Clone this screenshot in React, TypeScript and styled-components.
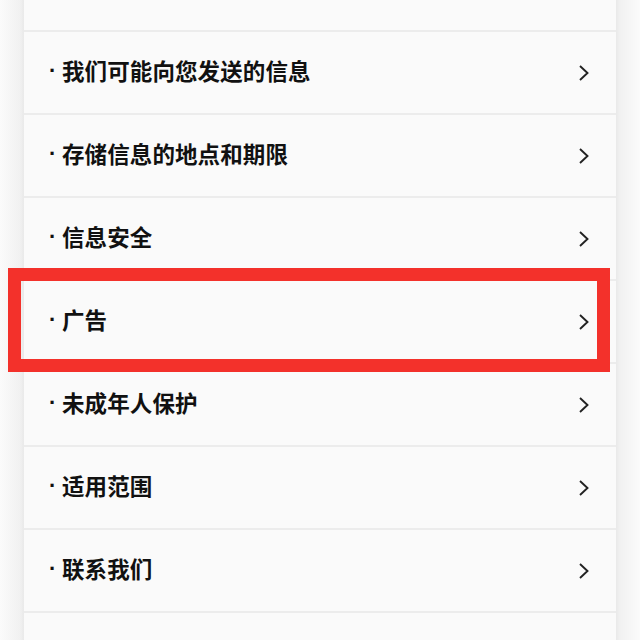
import React from "react";
import styled, { createGlobalStyle } from "styled-components";

const Global = createGlobalStyle`
  html, body { margin: 0; padding: 0; background: #f6f6f6; }
  body { font-family: "Noto Sans CJK SC", "Noto Sans", sans-serif; }
`;

const Page = styled.div`
  height: 640px;
  overflow: hidden;
  padding: 0 24px;
  background: linear-gradient(to right, #fbfbfb 0px, #efefef 24px, #efefef 616px, #fbfbfb 640px);
`;

const Card = styled.div`
  margin-top: -51px;
  background: #fafafa;
  box-shadow: 0 0 6px rgba(0, 0, 0, 0.05);
`;

const Row = styled.div`
  position: relative;
  height: 81px;
  border-bottom: 2px solid #ececec;
  display: flex;
  align-items: center;
  justify-content: space-between;
  padding: 0 26px 0 24px;
  box-sizing: content-box;
`;

const Label = styled.span`
  display: flex;
  align-items: center;
  font-size: 22.5px;
  font-weight: 700;
  color: #111;
  margin-top: -5px;
  letter-spacing: 0.1px;
`;

const Dot = styled.span`
  display: inline-block;
  width: 14px;
  font-family: "Liberation Sans", Arial, sans-serif;
  font-weight: 700;
  font-size: 22px;
  padding-left: 1px;
  margin-top: 2px;
  box-sizing: border-box;
`;

const Highlight = styled.span`
  position: absolute;
  top: -13px;
  left: -16px;
  right: 6px;
  bottom: -10px;
  border: 13px solid #f3312b;
  pointer-events: none;
`;

const Chevron = () => (
  <svg width="12" height="18" viewBox="0 0 12 18" fill="none">
    <polyline points="2,2 9.5,9 2,16" stroke="#222" strokeWidth="1.9" strokeLinejoin="miter" strokeLinecap="butt" />
  </svg>
);

const items = [
  "",
  "我们可能向您发送的信息",
  "存储信息的地点和期限",
  "信息安全",
  "广告",
  "未成年人保护",
  "适用范围",
  "联系我们",
  "",
];

export default function App() {
  return (
    <>
      <Global />
      <Page>
        <Card>
          {items.map((t, i) => (
            <Row key={i}>
              {t ? (
                <>
                  <Label>
                    <Dot>·</Dot>
                    <span>{t}</span>
                  </Label>
                  <Chevron />
                  {t === "广告" && <Highlight />}
                </>
              ) : null}
            </Row>
          ))}
        </Card>
      </Page>
    </>
  );
}
